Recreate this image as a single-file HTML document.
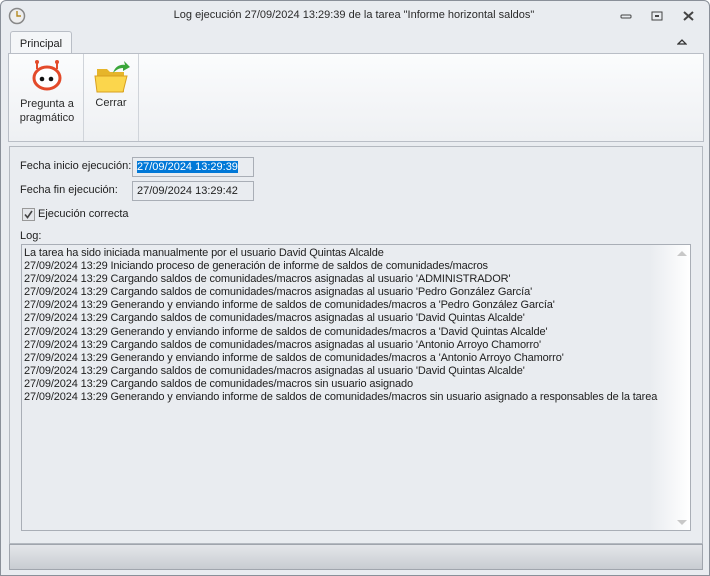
<!DOCTYPE html><html><head><style>
*{margin:0;padding:0;box-sizing:border-box}
body{width:710px;height:576px;background:#fff;font-family:"Liberation Sans",sans-serif;font-size:11px;color:#1e1e1e;position:relative;overflow:hidden}
.win{position:absolute;left:0;top:0;width:710px;height:576px;background:#e9ecf0;border:1px solid #8a9099;border-radius:6px 6px 0 0}
.abs{position:absolute}
.title{left:0;top:8px;width:706px;text-align:center;font-size:11px;color:#2a2a2a}
.tab{left:9px;top:30px;width:62px;height:23px;background:#f4f6f8;border:1px solid #b9bec6;border-bottom:none;border-radius:3px 3px 0 0;text-align:center;padding-top:6px;font-size:11px}
.rib{left:7px;top:52px;width:696px;height:89px;background:linear-gradient(#fbfcfd,#eef0f3);border:1px solid #b9bec6}
.sep{top:0;width:1px;height:87px;background:#d0d4da}
.lbl{font-size:11px;color:#2a2a2a;text-align:center}
.panel{left:8px;top:145px;width:694px;height:398px;border:1px solid #b4b9c0;background:#e9ecf0}
.tb{border:1px solid #a9aeb6;background:#e9ecf0;height:20px;font-size:11px;padding:3px 4px}
.log{left:20px;top:243px;width:670px;height:287px;border:1px solid #a9aeb6;background:linear-gradient(90deg,#e9ecf0 94%,#fff);font-size:11px;letter-spacing:-0.13px;line-height:13.1px;padding:2px 2px;white-space:pre;overflow:hidden}
.status{left:8px;top:543px;width:694px;height:26px;background:linear-gradient(#e4e6ea,#c8ccd2);border:1px solid #a0a5ad}
</style></head><body><div class="win">
<svg class="abs" style="left:7px;top:6px" width="18" height="18"><circle cx="9" cy="9" r="7.5" fill="#eee" stroke="#888" stroke-width="1.5"/><path d="M9 4v5h4" stroke="#b58a20" stroke-width="1.4" fill="none"/></svg>
<div class="abs title">Log ejecución 27/09/2024 13:29:39 de la tarea "Informe horizontal saldos"</div>
<svg class="abs" style="left:618px;top:10px" width="80" height="12"><rect x="2" y="4" width="10" height="3" rx="1" fill="none" stroke="#444"/><rect x="33" y="1" width="10" height="8" fill="none" stroke="#444"/><rect x="36" y="4" width="4" height="2" fill="#444"/><path d="M65 1l9 8M74 1l-9 8" stroke="#444" stroke-width="2"/></svg>
<svg class="abs" style="left:676px;top:37px" width="10" height="8"><path d="M1 6l4-4 4 4z" fill="none" stroke="#333" stroke-width="1.3"/></svg>
<div class="abs tab">Principal</div>
<div class="abs rib">
<div class="abs sep" style="left:74px"></div><div class="abs sep" style="left:129px"></div>
<svg class="abs" style="left:20px;top:5px" width="35" height="32"><circle cx="8" cy="3" r="2" fill="#e34a2a"/><circle cx="28" cy="3" r="2" fill="#e34a2a"/><path d="M8 3v7M28 3v7" stroke="#e34a2a" stroke-width="2"/><ellipse cx="18" cy="19" rx="13" ry="11" fill="#fff" stroke="#e34a2a" stroke-width="3"/><circle cx="13" cy="20" r="2.3" fill="#111"/><circle cx="22" cy="20" r="2.3" fill="#111"/></svg>
<div class="abs lbl" style="left:4px;top:43px;width:68px;line-height:14px">Pregunta a<br>pragmático</div>
<svg class="abs" style="left:85px;top:5px" width="36" height="34"><path d="M3 10h10l3 3h14v20H3z" fill="#e6b52a"/><path d="M1 17h32l-4 16H3z" fill="#fbd64c" stroke="#d8a020"/><path d="M19 14c2-7 8-9 12-8l-1-4 6 6-7 4v-3c-4 0-7 2-10 5z" fill="#3aa63a"/></svg>
<div class="abs lbl" style="left:76px;top:43px;width:52px">Cerrar</div>
</div>
<div class="abs panel"></div>
<div class="abs" style="left:19px;top:159px">Fecha inicio ejecución:</div>
<div class="abs tb" style="left:131px;top:156px;width:122px"><span style="background:#0078d7;color:#fff">27/09/2024 13:29:39</span></div>
<div class="abs" style="left:19px;top:183px">Fecha fin ejecución:</div>
<div class="abs tb" style="left:131px;top:180px;width:122px">27/09/2024 13:29:42</div>
<svg class="abs" style="left:21px;top:207px" width="13" height="13"><rect x=".5" y=".5" width="12" height="12" fill="#e4e6ea" stroke="#999"/><path d="M3 6.5l2.5 3L10 3" stroke="#444" stroke-width="1.6" fill="none"/></svg>
<div class="abs" style="left:37px;top:207px">Ejecución correcta</div>
<div class="abs" style="left:19px;top:229px">Log:</div>
<div class="abs log">La tarea ha sido iniciada manualmente por el usuario David Quintas Alcalde
27/09/2024 13:29 Iniciando proceso de generación de informe de saldos de comunidades/macros
27/09/2024 13:29 Cargando saldos de comunidades/macros asignadas al usuario 'ADMINISTRADOR'
27/09/2024 13:29 Cargando saldos de comunidades/macros asignadas al usuario 'Pedro González García'
27/09/2024 13:29 Generando y enviando informe de saldos de comunidades/macros a 'Pedro González García'
27/09/2024 13:29 Cargando saldos de comunidades/macros asignadas al usuario 'David Quintas Alcalde'
27/09/2024 13:29 Generando y enviando informe de saldos de comunidades/macros a 'David Quintas Alcalde'
27/09/2024 13:29 Cargando saldos de comunidades/macros asignadas al usuario 'Antonio Arroyo Chamorro'
27/09/2024 13:29 Generando y enviando informe de saldos de comunidades/macros a 'Antonio Arroyo Chamorro'
27/09/2024 13:29 Cargando saldos de comunidades/macros asignadas al usuario 'David Quintas Alcalde'
27/09/2024 13:29 Cargando saldos de comunidades/macros sin usuario asignado
27/09/2024 13:29 Generando y enviando informe de saldos de comunidades/macros sin usuario asignado a responsables de la tarea</div>
<svg class="abs" style="left:676px;top:249px" width="10" height="6"><path d="M0 6l5-5 5 5z" fill="#c8c8c8"/></svg>
<svg class="abs" style="left:676px;top:519px" width="10" height="6"><path d="M0 0l5 5 5-5z" fill="#c8c8c8"/></svg>
<div class="abs status"></div>
</div></body></html>
